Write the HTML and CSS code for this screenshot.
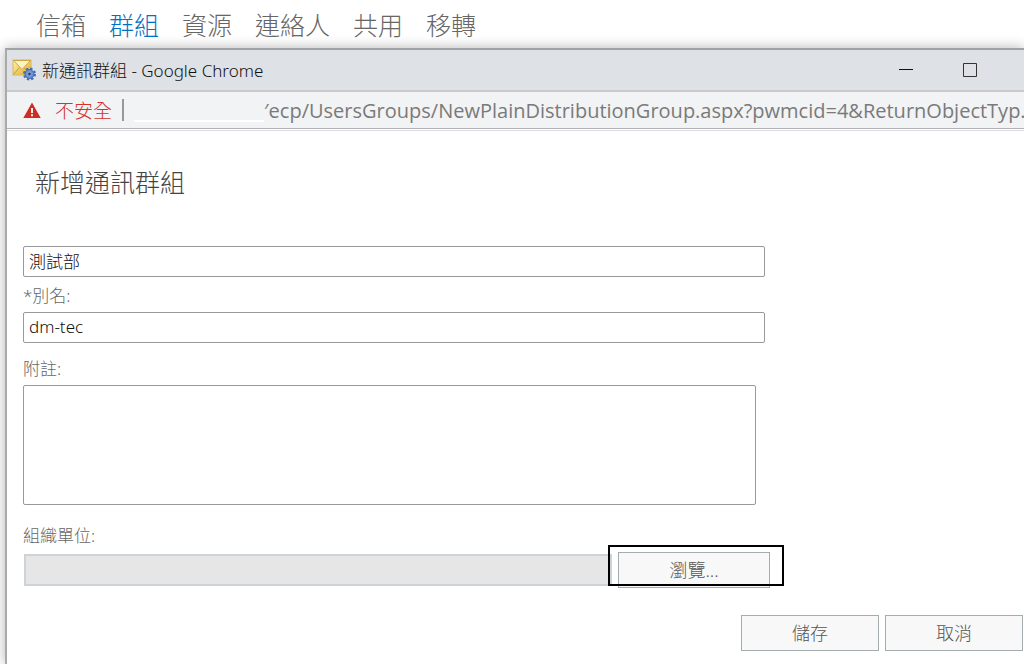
FILE: index.html
```html
<!doctype html>
<html lang="zh-Hant">
  <head>
    <meta charset="UTF-8" />
    <title>新通訊群組</title>
    <link rel="stylesheet" href="styles.css">
  </head>
  <body>
    <nav class="main-nav">
      <a href="#">信箱</a>
      <a href="#" class="active">群組</a>
      <a href="#">資源</a>
      <a href="#">連絡人</a>
      <a href="#">共用</a>
      <a href="#">移轉</a>
    </nav>

    <div class="window">
      <header class="title-bar">
        <svg class="app-icon" width="24" height="24" viewBox="0 0 24 24" aria-hidden="true">
          <defs>
            <linearGradient id="mail" x1="0" y1="0" x2="1" y2="1">
              <stop offset="0" stop-color="#fff5b8" />
              <stop offset="1" stop-color="#dfa91e" />
            </linearGradient>
          </defs>
          <rect x="1" y="2" width="18" height="15" fill="url(#mail)" stroke="#d8b95c" />
          <path d="M1.500 16.500 7.500 9.500M18.500 16.500 12 9.500" stroke="#c79a2e" fill="none" />
          <path d="M1.500 2.500h17L10 11.500z" fill="#fdf3c0" stroke="#cda544" />
          <circle cx="17.500" cy="16" r="5" fill="none" stroke="#4a6db5" stroke-width="3" stroke-dasharray="2.200 1.727" />
          <circle cx="17.500" cy="16" r="4.500" fill="#6d93d6" stroke="#3f65b0" />
          <circle cx="17.500" cy="16" r="1.800" fill="#253b62" stroke="#87a8de" />
        </svg>
        <span class="window-title">新通訊群組 - Google Chrome</span>
        <div class="window-controls">
          <button type="button" aria-label="最小化">
            <svg width="16" height="16" viewBox="0 0 16 16"><path d="M1 7.500h14" stroke="#111" /></svg>
          </button>
          <button type="button" aria-label="最大化">
            <svg width="16" height="16" viewBox="0 0 16 16"><path d="M1.500 1.500h13v13h-13z" fill="none" stroke="#333" /></svg>
          </button>
        </div>
      </header>

      <div class="address-bar">
        <svg class="warning-icon" width="18" height="17" viewBox="0 0 18 17" aria-hidden="true">
          <path d="M9 .5 17.700 16H.3z" fill="#cc2e24" />
          <path d="M9 6v5M9 12.300v2" stroke="#fff" stroke-width="1.800" />
        </svg>
        <span class="not-secure">不安全</span>
        <span class="divider"></span>
        <span class="hidden-host"></span>
        <span class="url">′ecp/UsersGroups/NewPlainDistributionGroup.aspx?pwmcid=4&amp;ReturnObjectTyp.</span>
      </div>

      <form class="group-form">
        <h1 class="form-title">新增通訊群組</h1>
        <input type="text" class="input-field" value="測試部" aria-label="顯示名稱">
        <label class="field-label" for="alias">*別名:</label>
        <input type="text" class="input-field" id="alias" value="dm-tec">
        <label class="field-label spaced" for="notes">附註:</label>
        <textarea class="input-field notes" id="notes"></textarea>
        <label class="field-label spaced" for="unit">組織單位:</label>
        <div class="unit-row">
          <input type="text" class="unit-field" id="unit" disabled>
          <div class="browse">
            <button type="button" class="btn browse-btn">瀏覽...</button>
            <span class="highlight"></span>
          </div>
        </div>
        <div class="form-actions">
          <button type="submit" class="btn">儲存</button>
          <button type="button" class="btn">取消</button>
        </div>
      </form>
    </div>
  </body>
</html>
```

FILE: styles.css
```css
* {
  box-sizing: border-box;
}

body {
  display: flex;
  flex-direction: column;
  min-height: 100vh;
  margin: 0;
  background: #fff;
  color: #666;
  font-family: "Noto Sans", "Noto Sans CJK TC", sans-serif;
  font-size: 17px;
  font-weight: 300;
  overflow-x: hidden;
}

.main-nav {
  display: flex;
  gap: 23px;
  padding: 5px 36px 3px;
}

.main-nav a {
  color: #666;
  font-size: 25px;
  line-height: 40px;
  text-decoration: none;
}

.main-nav a.active {
  color: #0072c6;
}

.window {
  flex: 1;
  margin-left: 5px;
  border-top: 2px solid #a0a2a6;
  border-left: 2px solid #aaa;
  background: #fff;
  box-shadow: 0 0 12px rgba(0, 0, 0, 0.3);
}

.title-bar {
  display: flex;
  align-items: center;
  height: 42px;
  padding-left: 5px;
  background: #dee1e6;
  border-bottom: 2px solid #c8cacd;
  color: #111;
}

.window-title {
  flex: 1;
  margin-left: 6px;
  padding-bottom: 2px;
}

.window-controls {
  display: flex;
  padding-right: 22px;
}

.window-controls button {
  display: flex;
  align-items: center;
  justify-content: center;
  width: 64px;
  height: 40px;
  padding: 0;
  background: none;
  border: none;
}

.address-bar {
  display: flex;
  align-items: center;
  height: 37px;
  padding-left: 16px;
  background: #f1f3f4;
  border-bottom: 1px solid #b0b2b5;
  font-size: 20px;
  white-space: nowrap;
  overflow: hidden;
}

.address-bar > * {
  flex-shrink: 0;
}

.not-secure {
  margin-left: 14px;
  color: #d0342a;
  font-size: 19px;
}

.divider {
  width: 2px;
  height: 22px;
  margin-left: 10px;
  background: #999;
}

.hidden-host {
  width: 130px;
  height: 24px;
  margin-left: 10px;
  border-bottom: 2px solid #fff;
}

.url {
  color: #7a7a7a;
  font-family: "Open Sans", sans-serif;
  font-weight: 400;
}

.group-form {
  margin-top: 1px;
  padding: 29px 1px 13px 16px;
  border-top: 1px solid #dcdde0;
}

.form-title {
  margin: 0 0 42px 12px;
  color: #444;
  font-size: 25px;
  font-weight: 300;
  line-height: 44px;
}

.input-field {
  display: block;
  width: 100%;
  max-width: 742px;
  height: 31px;
  padding: 0 5px 2px;
  background: #fff;
  border: 1px solid #999;
  border-radius: 2px;
  color: #111;
  font: inherit;
}

.notes {
  max-width: 733px;
  height: 120px;
  margin-bottom: 5px;
  resize: none;
}

.field-label {
  display: block;
  padding-top: 3px;
  line-height: 32px;
}

.spaced {
  padding-top: 10px;
}

.unit-row {
  display: flex;
  align-items: center;
  gap: 6px;
  max-width: 747px;
}

.unit-field {
  flex: 1;
  min-width: 0;
  height: 32px;
  margin-left: 1px;
  background: #e6e6e6;
  border: 2px solid #cdd3d6;
}

.browse {
  position: relative;
}

.btn {
  width: 138px;
  height: 36px;
  padding: 0 0 2px;
  background: #f8f8f8;
  border: 1px solid #a3adb0;
  color: #555;
  font: inherit;
  font-size: 18px;
}

.browse-btn {
  display: block;
  width: 152px;
}

/* frame around the browse button */
.highlight {
  position: absolute;
  top: -7px;
  left: -10px;
  width: 176px;
  height: 41px;
  border: 2px solid #000;
  pointer-events: none;
}

.form-actions {
  display: flex;
  justify-content: flex-end;
  gap: 6px;
  margin-top: 27px;
}
```
